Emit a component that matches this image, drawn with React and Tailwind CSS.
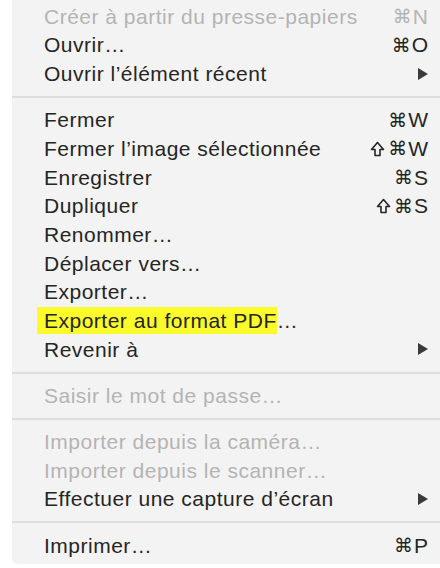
const sections = [
  [
    { label: 'Créer à partir du presse-papiers', shortcut: '⌘N', disabled: true },
    { label: 'Ouvrir…', shortcut: '⌘O' },
    { label: 'Ouvrir l’élément récent', submenu: true },
  ],
  [
    { label: 'Fermer', shortcut: '⌘W' },
    { label: 'Fermer l’image sélectionnée', shortcut: '⇧⌘W' },
    { label: 'Enregistrer', shortcut: '⌘S' },
    { label: 'Dupliquer', shortcut: '⇧⌘S' },
    { label: 'Renommer…' },
    { label: 'Déplacer vers…' },
    { label: 'Exporter…' },
    { label: 'Exporter au format PDF', suffix: '…', highlight: true },
    { label: 'Revenir à', submenu: true },
  ],
  [{ label: 'Saisir le mot de passe…', disabled: true }],
  [
    { label: 'Importer depuis la caméra…', disabled: true },
    { label: 'Importer depuis le scanner…', disabled: true },
    { label: 'Effectuer une capture d’écran', submenu: true },
  ],
  [{ label: 'Imprimer…', shortcut: '⌘P' }],
];

// outlined shift arrow, DejaVu's one is too thin
const ShiftIcon = () => (
  <svg width="15" height="16" viewBox="0 0 15 16" className="mr-[3px]">
    <path
      d="M7.5 1.5 L13.5 8.5 H10 V14.5 H5 V8.5 H1.5 Z"
      fill="none"
      stroke="currentColor"
      strokeWidth="1.6"
      strokeLinejoin="round"
    />
  </svg>
);

const Shortcut = ({ text }) => (
  <span className="flex items-center tracking-normal">
    {text.split('').map((ch, i) => {
      if (ch === '⇧') return <ShiftIcon key={i} />;
      if (ch === '⌘') {
        return (
          <span key={i} className="font-['DejaVu_Sans',sans-serif] text-[19px] mr-[1px]">
            {ch}
          </span>
        );
      }
      return <span key={i}>{ch}</span>;
    })}
  </span>
);

const MenuItem = ({ item }) => (
  <div
    className={`flex items-center justify-between h-[28.7px] pl-[32px] pr-[12px] ${
      item.disabled ? 'text-[#b4b4b4]' : 'text-[#252525]'
    }`}
  >
    <span className="whitespace-nowrap">
      {item.highlight ? (
        <span className="bg-[#fbfb2c] -ml-[7px] pl-[7px] py-[2px]">{item.label}</span>
      ) : (
        item.label
      )}
      {item.suffix}
    </span>
    {item.shortcut && <Shortcut text={item.shortcut} />}
    {item.submenu && (
      <svg width="10" height="12" viewBox="0 0 10 12" className="text-[#3a3a3a]">
        <path d="M0 0 L10 6 L0 12 Z" fill="currentColor" />
      </svg>
    )}
  </div>
);

export default function App() {
  return (
    <div className="w-[440px] h-[568px] bg-white overflow-hidden font-['Liberation_Sans',Arial,sans-serif] text-[21px] tracking-[0.5px]">
      <div className="ml-[12px] bg-[#f3f3f3] rounded-bl-[6px] pt-[2px] pb-[4px]">
        {sections.map((items, si) => (
          <div key={si}>
            {si > 0 && (
              <div className="h-[17.5px] flex items-center">
                <div className="w-full h-[2px] bg-[#dedede]" />
              </div>
            )}
            {items.map((item, i) => (
              <MenuItem key={i} item={item} />
            ))}
          </div>
        ))}
      </div>
    </div>
  );
}
